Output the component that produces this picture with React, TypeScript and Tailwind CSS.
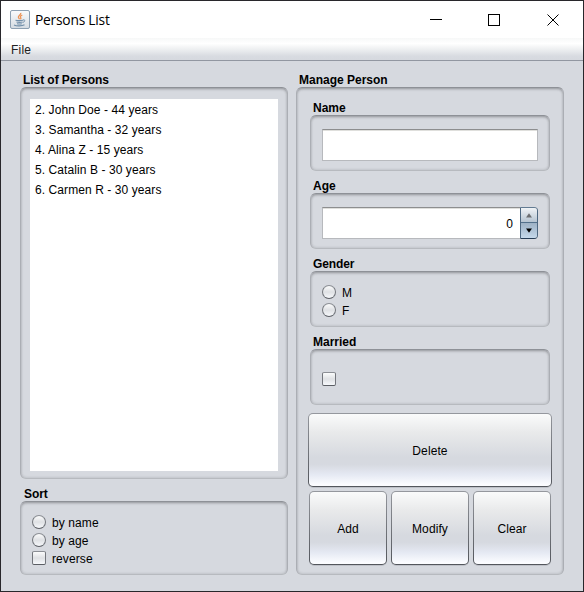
import React from "react";

const people = [
  "2. John Doe - 44 years",
  "3. Samantha - 32 years",
  "4. Alina Z - 15 years",
  "5. Catalin B - 30 years",
  "6. Carmen R - 30 years",
];

const inset =
  "rounded-[6px] border border-t-[#8e9197] border-x-[#abaeb4] border-b-[#b7babf] bg-[#d6d9df] shadow-[inset_0_2px_3px_-1px_rgba(0,0,0,0.25),inset_0_0_3px_rgba(0,0,0,0.18)]";

function Group({
  title,
  label = "pl-[3px]",
  box,
  children,
}: {
  title: string;
  label?: string;
  box: string;
  children: React.ReactNode;
}) {
  return (
    <section>
      <h2 className={`h-[14px] whitespace-nowrap font-bold leading-[14px] ${label}`}>{title}</h2>
      <div className={`${inset} ${box}`}>{children}</div>
    </section>
  );
}

function Mark({ round = false }: { round?: boolean }) {
  return (
    <span
      className={`block size-[14px] shrink-0 border border-t-[#8c8f95] border-x-[#73767c] border-b-[#5b5e64] bg-linear-to-b from-[#fbfcfc] via-[#dfe1e4] to-[#f6f8fb] ${
        round ? "rounded-full" : "rounded-[2px]"
      }`}
    />
  );
}

function Option({ text, round = false, gap = "gap-[6px]" }: { text: string; round?: boolean; gap?: string }) {
  return (
    <label className={`flex h-[18px] items-center ${gap}`}>
      <Mark round={round} />
      <span className="pt-px leading-[14px] tracking-[0.1px]">{text}</span>
    </label>
  );
}

function PushButton({ text, size }: { text: string; size: string }) {
  return (
    <button
      className={`rounded-[5px] bg-linear-to-b from-[#95989e] to-[#53565c] p-px shadow-[0_1px_0_rgba(120,124,132,0.25)] ${size}`}
    >
      <span className="flex size-full items-center justify-center rounded-[4px] bg-[linear-gradient(to_bottom,#fafbfb_0%,#e9eaeb_25%,#d6d9df_60%,#d6d9e0_70%,#e5e9f3_84%,#fbfcff_98%)] pt-px tracking-[0.1px]">
        {text}
      </span>
    </button>
  );
}

function JavaIcon() {
  return (
    <svg width="20" height="19" viewBox="0 0 20 19" fill="none">
      <defs>
        <linearGradient id="tile" x1="0" y1="0" x2="0" y2="1">
          <stop offset="0" stopColor="#fafbfc" />
          <stop offset="1" stopColor="#d4dbe2" />
        </linearGradient>
      </defs>
      <rect x="0.5" y="0.5" width="19" height="18" rx="1.5" fill="url(#tile)" stroke="#8da0b2" />
      <path d="M10.8 2.8c.5 2-3 2.700-2.400 4.500.2.700 1 1.100 1 2M12.300 5c-1.800.7-2.300 1.500-1.600 2.500.5.700.2 1.200-.3 1.700" stroke="#ed9355" strokeWidth="1.300" />
      <path d="M5.500 10.200c2 .6 5.200.5 7.500 0M6.500 12c1.900.5 4.100.5 6 0M7 13.700c1.500.4 3.400.4 4.800 0M4 15c2.500 1.300 8.200 1.200 10.500-.2" stroke="#6f8da8" strokeWidth="1.100" />
      <path d="M13 9.900c2.700-.5 2.200 2-.3 2.500" stroke="#6f8da8" />
    </svg>
  );
}

export default function App() {
  return (
    <div className="flex h-[592px] w-[584px] flex-col border border-[#28272b] bg-[#d6d9df] font-['Liberation_Sans',Arial,sans-serif] text-[12px] text-black">
      <header className="flex h-[37px] shrink-0 items-center bg-white pl-[9px]">
        <JavaIcon />
        <span className="mb-[2px] ml-[5px] origin-left scale-x-[0.92] whitespace-nowrap font-['Open_Sans',sans-serif] text-[15px] leading-[20px] tracking-[-0.25px]">
          Persons List
        </span>
        <div className="ml-auto flex pr-[23px]">
          <svg width="130" height="12" viewBox="0 0 130 12" fill="none" stroke="black" shapeRendering="crispEdges">
            <path d="M0 5.500h12" />
            <path d="M58.500.5h11v11h-11z" />
            <path d="M117.500.5l11 11M128.500.5l-11 11" shapeRendering="auto" />
          </svg>
        </div>
      </header>
      <nav className="flex h-[23px] shrink-0 items-center border-b border-[#9297a1] bg-[linear-gradient(to_bottom,#f7f8f8_0%,#ffffff_25%,#ebedef_55%,#d8dbe1_82%,#d6d9df_100%)] pl-[10px] pt-px text-[#222]">
        <span className="tracking-[0.2px]">File</span>
      </nav>
      <main className="flex gap-[8px] pl-[19px] pt-[12px]">
        <div className="flex w-[268px] flex-col gap-[8px]">
          <Group title="List of Persons" label="pl-[3px] tracking-[-0.06px]" box="h-[392px] px-[9px] pt-[11px]">
            <ul className="h-[372px] bg-white pl-[5px] pt-px tracking-[0.08px]">
              {people.map((p) => (
                <li key={p} className="h-[20px] leading-[20px]">{p}</li>
              ))}
            </ul>
          </Group>
          <Group title="Sort" label="pl-[4px] tracking-[-0.1px]" box="h-[74px] pl-[11px] pt-[11px]">
            <Option text="by name" round />
            <Option text="by age" round />
            <Option text="reverse" />
          </Group>
        </div>
        <div className="w-[268px]">
          <Group title="Manage Person" box="h-[488px] pl-[11px] pt-[13px]">
            <div className="ml-[2px] flex w-[240px] flex-col gap-[8px]">
              <Group title="Name" box="h-[56px] px-[11px] pt-[13px]">
                <div className="h-[32px] border border-t-[#8d8e8f] border-x-[#b7b9bd] border-b-[#b7b9bd] bg-white shadow-[inset_0_1px_0_#dfdfdc]" />
              </Group>
              <Group title="Age" box="h-[56px] px-[11px] pt-[13px]">
                <div className="flex h-[32px]">
                  <div className="flex grow items-center justify-end border border-r-0 border-t-[#8d8e8f] border-l-[#b7b9bd] border-b-[#b7b9bd] bg-white pr-[7px] pt-px shadow-[inset_0_1px_0_#dfdfdc]">
                    0
                  </div>
                  <div className="flex w-[18px] flex-col overflow-hidden rounded-r-[4px] border border-t-[#637b92] border-x-[#4d6780] border-b-[#253c55]">
                    <span className="flex h-[15px] items-center justify-center border-b border-[#53708b] bg-linear-to-b from-[#f0f3f6] to-[#b6c4d1] pt-px">
                      <svg width="6" height="5" viewBox="0 0 6 5"><path d="M0 4.500L3 .3 6 4.500z" fill="#6b6d70" /></svg>
                    </span>
                    <span className="flex h-[15px] items-center justify-center bg-linear-to-b from-[#9eb2c5] to-[#c4d8ea]">
                      <svg width="6" height="5" viewBox="0 0 6 5"><path d="M0 .5L3 4.700 6 .5z" fill="#000" /></svg>
                    </span>
                  </div>
                </div>
              </Group>
              <Group title="Gender" label="pl-[3px] tracking-[-0.1px]" box="h-[56px] pl-[11px] pt-[11px]">
                <Option text="M" round />
                <Option text="F" round />
              </Group>
              <Group title="Married" box="h-[56px] pl-[11px] pt-[22px]">
                <Mark />
              </Group>
            </div>
            <div className="mt-[8px] flex w-[244px] flex-col items-center gap-[4px]">
              <PushButton text="Delete" size="h-[74px] w-[244px]" />
              <div className="flex gap-[4px]">
                <PushButton text="Add" size="h-[74px] w-[78px]" />
                <PushButton text="Modify" size="h-[74px] w-[78px]" />
                <PushButton text="Clear" size="h-[74px] w-[78px]" />
              </div>
            </div>
          </Group>
        </div>
      </main>
    </div>
  );
}
